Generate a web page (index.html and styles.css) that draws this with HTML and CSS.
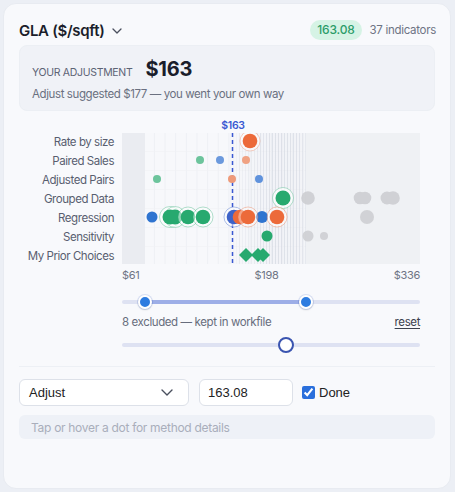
FILE: index.html
```html
<!DOCTYPE html>
<html>
<head>
<meta charset="utf-8">
<link rel="stylesheet" href="styles.css">
</head>
<body>
<div class="card">
  <header class="head">
    <div class="title">GLA ($/sqft)
      <svg class="chev" width="10" height="6" viewBox="0 0 10 6"><path d="M1 1l4 4 4-4" fill="none" stroke="#4a4f5e" stroke-width="1.3" stroke-linecap="round" stroke-linejoin="round"/></svg>
    </div>
    <div class="meta"><span class="badge">163.08</span><span class="count">37 indicators</span></div>
  </header>

  <section class="summary">
    <div class="sum-top"><span class="eyebrow">YOUR ADJUSTMENT</span><span class="amount">$163</span></div>
    <p class="sum-note">Adjust suggested $177 — you went your own way</p>
  </section>

  <section class="chart">
    <div class="labels">
      <span>Rate by size</span>
      <span>Paired Sales</span>
      <span>Adjusted Pairs</span>
      <span>Grouped Data</span>
      <span>Regression</span>
      <span>Sensitivity</span>
      <span>My Prior Choices</span>
    </div>
    <div class="plot-wrap">
      <div class="marker-label" style="left:111px">$163</div>
      <svg class="plot" width="298" height="131" viewBox="0 0 298 131">
        <defs>
          <pattern id="grid" width="10.64" height="19" patternUnits="userSpaceOnUse" x="0" y="-1">
            <rect x="0" y="0" width="0.8" height="19" fill="#eceef3"/>
            <rect x="0" y="0" width="10.64" height="0.6" fill="#f0f1f5"/>
          </pattern>
          <pattern id="stripe" width="3" height="10" patternUnits="userSpaceOnUse">
            <rect width="1" height="10" fill="#c9ced9"/>
          </pattern>
          <linearGradient id="dg" x1="0" x2="1" y1="0" y2="0">
            <stop offset="0" stop-color="#fff" stop-opacity="0.05"/>
            <stop offset="0.3" stop-color="#fff" stop-opacity="0.25"/>
            <stop offset="0.6" stop-color="#fff" stop-opacity="0.5"/>
            <stop offset="0.9" stop-color="#fff" stop-opacity="0.45"/>
            <stop offset="1" stop-color="#fff" stop-opacity="0.3"/>
          </linearGradient>
          <mask id="dm"><rect x="106" y="0" width="78" height="131" fill="url(#dg)"/></mask>
        </defs>
        <rect width="298" height="131" fill="#f7f8fb"/>
        <rect width="298" height="131" fill="url(#grid)"/>
        <rect x="106" width="78" height="131" fill="#e4e7ee" opacity="0.6" mask="url(#dm)"/>
        <rect x="106" width="78" height="131" fill="url(#stripe)" mask="url(#dm)"/>
        <rect x="0" width="23" height="131" fill="#eaecf1"/>
        <rect x="184" width="114" height="131" fill="#eff1f4"/>

        <line x1="110.5" y1="0" x2="110.5" y2="131" stroke="#3a58d2" stroke-width="1.5" stroke-dasharray="4 3"/>

        <!-- row 1 -->
        <circle cx="128" cy="8" r="10" fill="#fff" fill-opacity=".6" stroke="#ec6a3a" stroke-opacity=".3"/>
        <circle cx="128" cy="8" r="7.3" fill="#ec6a3a"/>
        <!-- row 2 -->
        <circle cx="78" cy="27" r="4" fill="#6cc49c"/>
        <circle cx="98" cy="27" r="4" fill="#6b99dd"/>
        <circle cx="124" cy="27" r="4" fill="#f0a283"/>
        <!-- row 3 -->
        <circle cx="35" cy="46" r="4" fill="#6cc49c"/>
        <circle cx="110" cy="46" r="4" fill="#ee9a7a"/>
        <circle cx="137" cy="46" r="4" fill="#5f92dc"/>
        <!-- row 4 -->
        <circle cx="161" cy="65" r="10.5" fill="#fff" fill-opacity=".7" stroke="#27a96f" stroke-opacity=".35"/>
        <circle cx="161" cy="65" r="7.5" fill="#27a96f"/>
        <g fill="#cbccd0" opacity=".85">
          <circle cx="186" cy="65" r="6.8"/>
          <circle cx="238" cy="65" r="6.3"/>
          <circle cx="243" cy="65" r="6.3"/>
          <circle cx="265" cy="65" r="6.5"/>
          <circle cx="271" cy="65" r="6.8"/>
        </g>
        <!-- row 5 -->
        <circle cx="30" cy="84" r="5.5" fill="#2f74d0"/>
        <circle cx="48" cy="84" r="10.5" fill="#fff" fill-opacity=".6" stroke="#27a96f" stroke-opacity=".35"/>
        <circle cx="53" cy="84" r="10.5" fill="#fff" fill-opacity=".6" stroke="#27a96f" stroke-opacity=".35"/>
        <circle cx="48" cy="84" r="7.5" fill="#27a96f"/>
        <circle cx="53" cy="84" r="7.5" fill="#27a96f"/>
        <circle cx="66" cy="84" r="10" fill="#fff" fill-opacity=".5" stroke="#27a96f" stroke-opacity=".35"/>
        <circle cx="66" cy="84" r="7.3" fill="#27a96f"/>
        <circle cx="81" cy="84" r="10" fill="#fff" fill-opacity=".5" stroke="#27a96f" stroke-opacity=".35"/>
        <circle cx="81" cy="84" r="7.3" fill="#27a96f"/>
        <circle cx="112" cy="84" r="10" fill="#fff" fill-opacity=".5" stroke="#3d63c9" stroke-opacity=".4"/>
        <circle cx="112" cy="84" r="7.3" fill="#3d63c9"/>
        <circle cx="140" cy="84" r="6" fill="#2f74d0"/>
        <circle cx="118" cy="84" r="7.3" fill="#ec6a3a"/>
        <circle cx="126" cy="84" r="10" fill="#fff" fill-opacity=".4" stroke="#ec6a3a" stroke-opacity=".35"/>
        <circle cx="126" cy="84" r="7.3" fill="#ec6a3a"/>
        <circle cx="155" cy="84" r="10" fill="#fff" fill-opacity=".6" stroke="#ec6a3a" stroke-opacity=".35"/>
        <circle cx="155" cy="84" r="7.3" fill="#ec6a3a"/>
        <circle cx="245" cy="84" r="7" fill="#cbccd0" opacity=".85"/>
        <!-- row 6 -->
        <circle cx="145" cy="103" r="5.5" fill="#27a96f"/>
        <circle cx="186" cy="103" r="5.5" fill="#cbccd0" opacity=".85"/>
        <circle cx="202" cy="103" r="4" fill="#cbccd0" opacity=".85"/>
        <!-- row 7 -->
        <g fill="#27a96f">
          <path d="M124 115l7 7-7 7-7-7z"/>
          <path d="M136 115l7 7-7 7-7-7z"/>
          <path d="M141 115l7 7-7 7-7-7z"/>
        </g>
      </svg>
    </div>
  </section>

  <div class="axis"><span>$61</span><span>$198</span><span>$336</span></div>

  <div class="range">
    <div class="track"></div>
    <div class="fill" style="left:23px;width:161px"></div>
    <span class="thumb" style="left:23px"></span>
    <span class="thumb" style="left:184px"></span>
  </div>

  <div class="excl"><span>8 excluded — kept in workfile</span><a class="reset">reset</a></div>

  <div class="range single">
    <div class="track"></div>
    <span class="thumb hollow" style="left:164px"></span>
  </div>

  <div class="divider"></div>

  <div class="controls">
    <div class="select"><span>Adjust</span>
      <svg width="12" height="7" viewBox="0 0 12 7"><path d="M1 1l5 5 5-5" fill="none" stroke="#4a4f5e" stroke-width="1.4" stroke-linecap="round" stroke-linejoin="round"/></svg>
    </div>
    <input class="num" type="text" value="163.08">
    <label class="done"><input type="checkbox" checked><span>Done</span></label>
  </div>

  <div class="hint">Tap or hover a dot for method details</div>
</div>
</body>
</html>
```

FILE: styles.css
```css
* { box-sizing: border-box; }
html, body { margin: 0; padding: 0; }
body {
  background: #eceff5;
  font-family: "Inter", "Liberation Sans", sans-serif;
  color: #1c2030;
  width: 455px;
  height: 492px;
  overflow: hidden;
}
.card {
  margin: 3px 4px 0 3px;
  height: 486px;
  background: #f8f9fc;
  border: 1px solid #e8ebf1;
  border-radius: 13px;
  padding: 16px 15px 0 15px;
}
.head {
  display: flex;
  align-items: center;
  justify-content: space-between;
  height: 20px;
}
.title {
  font-size: 15px;
  font-weight: 600;
  letter-spacing: -0.3px;
  color: #1b1e2b;
  display: flex;
  align-items: center;
  gap: 7px;
}
.chev { margin-top: 1px; }
.meta { display: flex; align-items: center; gap: 8px; margin-right: -1px; }
.badge {
  background: #d6f3e5;
  color: #2b9c69;
  font-size: 12px;
  font-weight: 500;
  padding: 0 7px;
  height: 20px;
  line-height: 20px;
  border-radius: 10px;
  letter-spacing: -0.2px;
}
.count { font-size: 11.5px; color: #6e7484; letter-spacing: -0.3px; }

.summary {
  margin-top: 5px;
  background: #f0f2f7;
  border: 1px solid #eceff4;
  border-radius: 8px;
  padding: 11px 12px 8px 12px;
}
.sum-top { display: flex; align-items: baseline; gap: 13px; height: 24px; }
.eyebrow { font-size: 10.5px; color: #5d6375; letter-spacing: -0.3px; }
.amount { font-size: 20px; font-weight: 700; color: #1a1d2b; letter-spacing: -0.2px; line-height: 24px; }
.sum-note { margin: 5px 0 0 0; font-size: 11.5px; line-height: 16px; color: #6a7080; letter-spacing: -0.4px; }

.chart {
  margin-top: 9px;
  display: grid;
  grid-template-columns: 95px 298px;
  column-gap: 8px;
}
.labels {
  margin-top: 12px;
  display: grid;
  grid-template-rows: repeat(7, 19px);
  align-items: center;
  justify-items: end;
  font-size: 11.5px;
  color: #585e70;
  letter-spacing: -0.45px;
}
.plot-wrap { position: relative; padding-top: 13px; }
.plot { display: block; }
.marker-label {
  position: absolute;
  top: 0;
  transform: translateX(-50%);
  font-size: 10.5px;
  font-weight: 600;
  line-height: 12px;
  color: #3a58d2;
  letter-spacing: -0.3px;
}

.axis {
  margin: 3px 0 0 103px;
  width: 298px;
  display: flex;
  justify-content: space-between;
  font-size: 11px;
  line-height: 14px;
  color: #6e7484;
  letter-spacing: -0.3px;
}

.range {
  position: relative;
  margin: 13px 0 0 103px;
  width: 298px;
  height: 14px;
}
.range .track {
  position: absolute;
  left: 0; right: 0; top: 5px;
  height: 4px;
  border-radius: 2px;
  background: #dee2f2;
}
.range .fill {
  position: absolute;
  top: 5px;
  height: 4px;
  background: #9daee7;
}
.thumb {
  position: absolute;
  top: 0;
  width: 14px;
  height: 14px;
  margin-left: -7px;
  border-radius: 50%;
  background: #2d7ce0;
  border: 2px solid #fff;
  box-shadow: 0 0 0 1px rgba(40, 90, 200, 0.15), 0 1px 2px rgba(0,0,0,0.15);
}
.range.single { margin-top: 7px; height: 16px; }
.range.single .track { top: 6px; }
.thumb.hollow {
  width: 16px; height: 16px; margin-left: -8px;
  background: #fff;
  border: 2px solid #3a54b0;
  box-shadow: none;
}

.excl {
  margin: 5px 0 0 103px;
  width: 298px;
  display: flex;
  justify-content: space-between;
  font-size: 11.5px;
  line-height: 16px;
  color: #676d7d;
  letter-spacing: -0.4px;
}
.reset { color: #3b404d; text-decoration: underline; text-underline-offset: 2px; }

.divider { margin-top: 13px; height: 1px; background: #edf0f5; }

.controls {
  margin-top: 12px;
  display: flex;
  align-items: center;
  height: 27px;
}
.select {
  width: 170px;
  height: 27px;
  border: 1px solid #dde1e9;
  border-radius: 6px;
  background: #fff;
  display: flex;
  align-items: center;
  justify-content: space-between;
  padding: 0 15px 0 9px;
  font-family: "Liberation Sans", Arial, sans-serif;
  font-size: 13px;
  color: #222;
}
.num {
  margin-left: 10px;
  width: 94px;
  height: 27px;
  border: 1px solid #dde1e9;
  border-radius: 6px;
  background: #fff;
  padding: 0 8px;
  font-family: "Liberation Sans", Arial, sans-serif;
  font-size: 13px;
  color: #222;
  outline: none;
}
.done {
  display: flex;
  align-items: center;
  margin-left: 8px;
  font-family: "Liberation Sans", Arial, sans-serif;
  font-size: 13px;
  color: #222;
}
.done input { margin: 0 4px 0 1px; width: 13px; height: 13px; accent-color: #2a6fdc; }

.hint {
  margin-top: 9px;
  height: 24px;
  border-radius: 6px;
  background: #eef1f7;
  padding: 0 12px;
  display: flex;
  align-items: center;
  font-size: 12px;
  color: #a9aebb;
  letter-spacing: -0.3px;
}
```
